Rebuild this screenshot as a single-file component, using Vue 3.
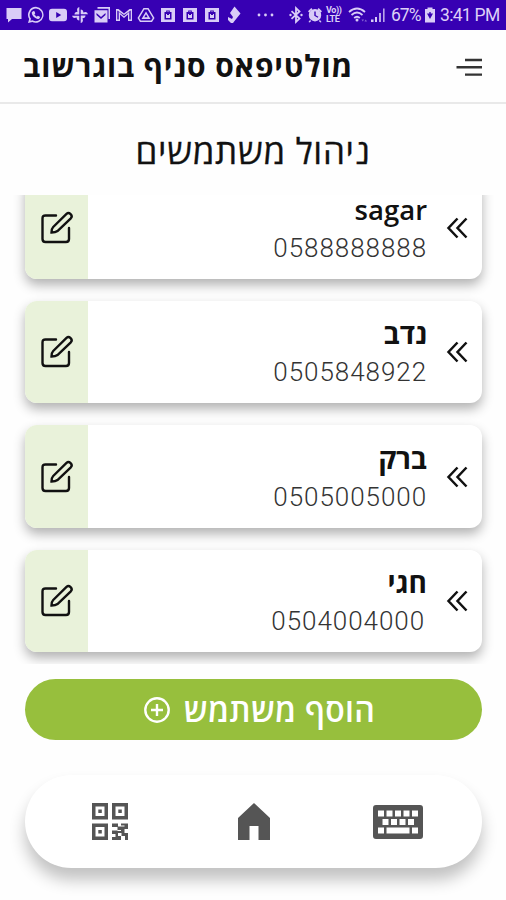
<template>
  <div class="screen">
    <div class="status-bar">
      <div class="notifications">
        <svg v-for="(icon, i) in notifications" :key="i" viewBox="0 0 18 18" fill-rule="evenodd">
          <path :d="icon" />
        </svg>
      </div>
      <svg class="dots" viewBox="0 0 20 18">
        <circle cx="3" cy="9" r="1.4" /><circle cx="9.5" cy="9" r="1.4" /><circle cx="16" cy="9" r="1.4" />
      </svg>
      <svg class="bluetooth" viewBox="0 0 14 18">
        <path class="line" d="M2.5 5.2 10.5 12.500 7 15.800V2.200l3.500 3.300-8 7.300" />
        <circle cx="1.500" cy="9" r="1.200" /><circle cx="12.500" cy="9" r="1.200" />
      </svg>
      <svg class="alarm" viewBox="0 0 16 18" fill-rule="evenodd">
        <path d="M8 3a6 6 0 1 1 0 12.400A6 6 0 0 1 8 3zM7.300 5.500v4.300l3.400 2 .7-1.100-2.700-1.500V5.500zM1 5.200 4.300 2l1.100 1.300L2.200 6.500zM15 5.200 11.700 2l-1.100 1.300 3.200 3.200zM3 14l-1.500 2 1 .6L4.300 15zM13 14l1.500 2-1 .6-1.800-1.600z" />
      </svg>
      <div class="volte"><span>Vo))</span><span>LTE</span></div>
      <svg class="wifi" viewBox="0 0 20 18">
        <path class="line" d="M1 6q8-7 16 0M3.500 9q5.500-5 11 0M6.200 12q2.800-2.600 5.600 0" />
        <circle cx="9" cy="14" r="1.500" />
        <path d="M13.500 13.500h2.500l-1.250 2zM16.500 15.500H19l-1.250-2z" opacity=".5" />
      </svg>
      <svg class="signal" viewBox="0 0 16 18">
        <path d="M1 13.500h2.500V16H1zM5 11h2v5H5z" />
        <path d="M9 7h2v9H9zM13 2.500h1.600V16H13z" opacity=".8" />
      </svg>
      <span class="percent">67%</span>
      <svg class="battery" viewBox="0 0 12 18" fill-rule="evenodd">
        <path d="M3.500 1.500h5V3H11v13.500H1V3h2.500zM3 7.500 6 13l3-5.500H6.700V6H5.300v1.500z" />
      </svg>
      <span class="clock">3:41 PM</span>
    </div>

    <header class="header">
      <svg class="menu" viewBox="0 0 28 22">
        <path d="M10 4H27M1.500 11.300H27M10 18.600H27" />
      </svg>
      <h1>מולטיפאס סניף בוגרשוב</h1>
    </header>

    <h2 class="title"><span>ניהול משתמשים</span></h2>

    <main class="list">
      <article v-for="user in users" :key="user.phone" class="card">
        <svg class="chevrons" viewBox="0 0 22 22">
          <path d="M11.500 1.500 2.500 11l9 9.500M20.500 1.500 11.500 11l9 9.500" />
        </svg>
        <div class="info">
          <strong :class="{ latin: user.latin }">{{ user.name }}</strong>
          <span class="phone">{{ user.phone }}</span>
        </div>
        <button class="edit" aria-label="עריכה">
          <svg viewBox="0 0 34 34">
            <path d="M16 4.500H5.500Q2.500 4.500 2.500 7.500v20.500Q2.500 31 5.500 31h20.500q3 0 3-3V17" />
            <path d="M11.500 21.500q0-3.800 1.700-5.500L26.500 2.900q2-1.700 4.100.3t.2 4.100L17.500 20Q15.500 21.500 11.500 21.500z" />
          </svg>
        </button>
      </article>
    </main>

    <button class="add">
      <span>הוסף משתמש</span>
      <svg viewBox="0 0 26 26">
        <circle cx="13" cy="13" r="11.700" />
        <path d="M13 7v12M7 13h12" />
      </svg>
    </button>

    <nav class="nav">
      <svg class="keyboard" viewBox="0 0 50 34" fill-rule="evenodd">
        <path d="M3 0h44q3 0 3 3v28q0 3-3 3H3q-3 0-3-3V3q0-3 3-3zM5 5.500v6h6v-6zM13.500 5.500v6h6v-6zM22 5.500v6h6v-6zM30.500 5.500v6h6v-6zM39 5.500v6h6v-6zM9.500 14v6h6v-6zM18 14v6h6v-6zM26.500 14v6h6v-6zM35 14v6h6v-6zM5 22.500v6h6v-6zM13.500 22.500v6h23v-6zM39 22.500v6h6v-6z" />
      </svg>
      <svg class="home" viewBox="0 0 32 37">
        <path d="M16 0 32 15v22H20.500V23h-9v14H0V15z" />
      </svg>
      <svg class="qr" viewBox="0 0 36 37" fill-rule="evenodd">
        <path d="M0 0h16v16.500H0zM3.500 3.500v9.500h9V3.500zM6.300 6.500h3.500V10H6.300zM20 0h16v16.500H20zM23.500 3.500v9.500h9V3.500zM26.300 6.500h3.500V10h-3.500zM0 20.500h16V37H0zM3.500 24v9.500h9V24zM6.300 27h3.500v3.500H6.300z" />
        <path d="M20 20.500h6v3h3v3.500h-3.500V24H20zM29 20.500h7V26h-3.500v4H36v7h-3v-4h-3.500v-3H26v3h3v4h-9v-3h3.500v-3H20v-3.500h5.500V28H29v-4.500h3.500v-1H29z" />
      </svg>
    </nav>
  </div>
</template>

<script setup>
const users = [
  { name: "sagar", phone: "0588888888", latin: true },
  { name: "נדב", phone: "0505848922" },
  { name: "ברק", phone: "0505005000" },
  { name: "חגי", phone: "0504004000" },
];

const bag =
  "M2 2h14v14H2zM5.500 6v7.500h7V6h-1.700V4.500H7.200V6zM8.200 5.500h1.600V6H8.200zM7 8h1v1h2V8h1v4H7z";

// message, whatsapp, youtube, photos, mail, gmail, drive, three shops, tag
const notifications = [
  "M1.500 2h15v11H7l-4 3.500V13H1.500z",
  "M9 .8a8 8 0 1 1-3.700 15.300L1 17l1.200-4A8 8 0 0 1 9 .8zM9 2.600a6.300 6.300 0 0 0-5 10.200l-.6 2 2.200-.5A6.300 6.300 0 1 0 9 2.600zM6.500 5l1.200.4.500 2-.9 1.100 2.400 2.200 1.200-.9 2 .9c.4 2-1.900 2.600-3.600 1.900C6.600 11.500 3.900 8 5 6z",
  "M3 2.800h12q3 0 3 3v6.400q0 3-3 3H3q-3 0-3-3V5.800q0-3 3-3zM7.200 6v6l5-3z",
  "M8.300 1v7.500H3.500q0-2.500 3-2.700Q5 2 8.300 1zM17 8.300H9.700V3.500q2.500 0 2.700 3Q16 5 17 8.300zM9.700 17V9.500h4.800q0 2.500-3 2.700Q13 16 9.700 17zM1 9.700h7.300v4.800q-2.500 0-2.700-3Q2 13 1 9.700z",
  "M4.500 1H17v12h-1.500V2.700h-11zM1.500 4.200h13V16.500h-13zM3.500 7v2L8 13l4.500-4V7L8 11z",
  "M1 3h2.500L9 7.500 14.500 3H17v12h-4V8.500L9 12 5 8.500V15H1zM2.300 4.500v9h1.400V5.800L9 10.300l5.300-4.500v7.700h1.400v-9L9 9z",
  "M6.500 2h5L17.500 12 15 16H3L.5 12zM7.300 3.500 2.200 12l1.600 2.500h10.400l1.600-2.500-5.100-8.500zM9 5.500l4.500 7.500h-9zM9 8.300l-1.700 3h3.400z",
  bag,
  bag,
  bag,
  "M9.500.5 15.500 7.500 9.500 15 8 17H6L3 14v-3l4 2 1-2L5 7z",
];
</script>

<style>
body {
  background: #fff;
}
</style>

<style scoped>
.screen {
  display: flex;
  flex-direction: column;
  width: 506px;
  height: 900px;
  overflow: hidden;
  direction: rtl;
  background: #fefefe;
  color: #111;
  font-family: "Open Sans", "Noto Sans", sans-serif;
}
button {
  border: none;
  padding: 0;
  font-family: inherit;
}
.status-bar {
  display: flex;
  flex: none;
  align-items: center;
  direction: ltr;
  height: 30px;
  background: #3700b3;
  color: #ddd0f7;
  fill: #d9ccf7;
  font-family: Roboto, sans-serif;
  white-space: nowrap;
}
.status-bar > * {
  flex: none;
}
.notifications {
  display: flex;
  gap: 4px;
  margin-left: 5px;
}
.notifications svg {
  width: 18px;
  height: 18px;
}
.line {
  fill: none;
  stroke: #d9ccf7;
  stroke-width: 1.8;
}
.dots {
  width: 20px;
  height: 18px;
  margin-left: 13px;
}
.bluetooth {
  width: 14px;
  height: 18px;
  margin-left: 13px;
}
.alarm {
  width: 16px;
  height: 18px;
  margin-left: 4px;
}
.volte {
  display: flex;
  flex-direction: column;
  width: 17px;
  margin-left: 3px;
  font-size: 9px;
  font-weight: 700;
  line-height: 9px;
  letter-spacing: -0.4px;
}
.wifi {
  width: 20px;
  height: 18px;
  margin-left: 5px;
}
.signal {
  width: 16px;
  height: 18px;
  margin-left: 2px;
}
.percent {
  width: 32px;
  margin-left: 5px;
  font-size: 17.5px;
  letter-spacing: -1px;
}
.battery {
  width: 12px;
  height: 18px;
  margin-left: 1px;
}
.clock {
  margin-left: 4px;
  font-size: 17.5px;
  letter-spacing: -0.7px;
}
.header {
  display: flex;
  flex: none;
  align-items: center;
  justify-content: space-between;
  height: 72px;
  padding: 0 23px;
  border-bottom: 2px solid #e9e9e9;
}
.header h1 {
  margin: 0;
  font-size: 30px;
  font-weight: 700;
  line-height: 40px;
  letter-spacing: 0.85px;
  white-space: nowrap;
}
.menu {
  width: 28px;
  height: 22px;
  margin-top: 2px;
  fill: none;
  stroke: #333;
  stroke-width: 2.4;
}
.title {
  flex: none;
  height: 91px;
  margin: 0;
  box-sizing: border-box;
  text-align: center;
  font-size: 35px;
  font-weight: 500;
  line-height: 93px;
  letter-spacing: 0.7px;
  -webkit-text-stroke: 0.3px #111;
}
.list {
  display: flex;
  flex: none;
  flex-direction: column;
  justify-content: flex-end;
  gap: 22px;
  height: 469px;
  box-sizing: border-box;
  padding: 0 24px 12px 25px;
  overflow: hidden;
}
.card {
  display: flex;
  flex: none;
  align-items: center;
  height: 102.3px;
  border-radius: 12px;
  background: #fff;
  box-shadow: 0 6px 12px rgba(0, 0, 0, 0.3);
}
.chevrons {
  width: 22px;
  height: 22px;
  margin-right: 14px;
  fill: none;
  stroke: #111;
  stroke-width: 2.5;
}
.info {
  display: flex;
  flex: 1;
  flex-direction: column;
  margin-right: 19px;
  padding-top: 2px;
}
.info strong {
  font-size: 28px;
  font-weight: 700;
  line-height: 39px;
}
.info .latin {
  font-size: 27.5px;
  font-weight: 600;
}
.phone {
  color: #333;
  font-family: Roboto, sans-serif;
  font-size: 26px;
  font-weight: 300;
  line-height: 39px;
  letter-spacing: 0.95px;
}
.card:last-child .phone {
  padding-right: 2px;
}
.edit {
  display: flex;
  align-items: center;
  justify-content: center;
  width: 63px;
  height: 100%;
  border-radius: 12px 0 0 12px;
  background: #e9f2da;
}
.edit svg {
  width: 34px;
  height: 34px;
  fill: none;
  stroke: #111;
  stroke-width: 2.4;
  stroke-linecap: round;
}
.add {
  display: flex;
  flex: none;
  align-items: center;
  justify-content: center;
  gap: 14px;
  height: 61px;
  margin: 15px 24px 0 25px;
  padding-left: 12px;
  border-radius: 31px;
  background: #97bf3d;
  color: #fff;
  font-size: 32px;
  font-weight: 600;
  letter-spacing: 0.3px;
}
.add svg {
  width: 26px;
  height: 26px;
  fill: none;
  stroke: #fff;
  stroke-width: 2.4;
}
.nav {
  display: flex;
  flex: none;
  align-items: center;
  justify-content: space-between;
  height: 93px;
  margin: 35px 24px 0 25px;
  padding: 0 59px 0 67px;
  box-sizing: border-box;
  border-radius: 47px;
  background: #fff;
  box-shadow: 0 12px 16px rgba(0, 0, 0, 0.24);
  fill: #555;
}
.keyboard {
  width: 50px;
  height: 34px;
}
.home {
  width: 32px;
  height: 37px;
  margin-left: 6px;
}
.qr {
  width: 36px;
  height: 37px;
}
</style>
